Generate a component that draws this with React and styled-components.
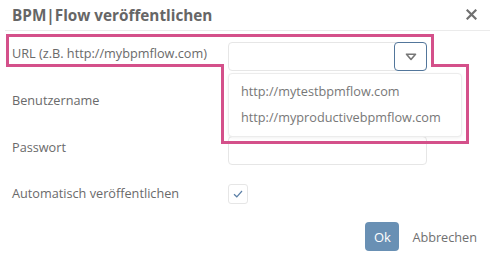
import React from "react";
import styled, { createGlobalStyle } from "styled-components";

const GlobalStyle = createGlobalStyle`
  html, body {
    margin: 0;
    padding: 0;
    background: #fff;
  }
  body {
    font-family: "Open Sans", "Liberation Sans", sans-serif;
    color: #666;
  }
`;

function App() {
  return (
    <>
      <GlobalStyle />
      <Dialog>
        <Header>
          <Title>BPM|Flow veröffentlichen</Title>
          <CloseButton aria-label="close">
            <svg width="11" height="11" viewBox="0 0 11 11">
              <path d="M1.5 1.5 L9.5 9.5 M9.5 1.5 L1.5 9.5" stroke="#707070" strokeWidth="2.2" strokeLinecap="square" />
            </svg>
          </CloseButton>
        </Header>
        <Form>
          <Row>
            <Label>URL (z.B. http://mybpmflow.com)</Label>
            <Combo>
              <Input />
              <DropButton>
                <svg width="12" height="8" viewBox="0 0 12 8">
                  <path d="M1.5 1.2 H10.5 L6 6.5 Z" fill="none" stroke="#777" strokeWidth="1.6" strokeLinejoin="round" />
                </svg>
              </DropButton>
              <Menu>
                <MenuItem>http://mytestbpmflow.com</MenuItem>
                <MenuItem>http://myproductivebpmflow.com</MenuItem>
              </Menu>
            </Combo>
          </Row>
          <Row>
            <Label>Benutzername</Label>
            <Input />
          </Row>
          <Row>
            <Label>Passwort</Label>
            <Input type="password" />
          </Row>
          <CheckRow>
            <CheckLabel>Automatisch veröffentlichen</CheckLabel>
            <CheckBox>
              <svg width="10" height="8" viewBox="0 0 10 8">
                <path d="M1 4.2 L3.8 6.8 L9 1" fill="none" stroke="#5b7fa6" strokeWidth="1.2" />
              </svg>
            </CheckBox>
          </CheckRow>
        </Form>
        <Footer>
          <OkButton>Ok</OkButton>
          <LinkButton>Abbrechen</LinkButton>
        </Footer>
        <Highlight width="495" height="260" viewBox="0 0 495 260">
          <path
            d="M7.5 35.5 H432.5 V65.5 H467.5 V142.5 H222.5 V65.5 H7.5 Z"
            fill="none"
            stroke="#d4508a"
            strokeWidth="3"
          />
        </Highlight>
      </Dialog>
    </>
  );
}

export default App;

const Dialog = styled.div`
  position: relative;
  width: 495px;
  height: 260px;
  box-sizing: border-box;
  overflow: hidden;
`;

const Header = styled.div`
  display: flex;
  align-items: center;
  justify-content: space-between;
  height: 30px;
  margin: 0 5px;
  padding: 0 13px 0 7px;
  border-bottom: 1px solid #ebebeb;
`;

const Title = styled.div`
  font-size: 15.3px;
  font-weight: 700;
  color: #666;
  margin-top: -1px;
`;

const CloseButton = styled.span`
  display: flex;
  align-items: center;
  margin-top: -1px;
`;

const Form = styled.div`
  display: flex;
  flex-direction: column;
  gap: 18px;
  padding: 11px 0 0 12px;
`;

const Row = styled.div`
  display: grid;
  grid-template-columns: 216px 199px;
  align-items: start;
  height: 29px;
`;

const CheckRow = styled(Row)`
  align-items: center;
  height: 20px;
  margin-top: 1px;
`;

const Label = styled.div`
  font-size: 12.7px;
  line-height: 22px;
  color: #6a6a6a;
`;

const CheckLabel = styled(Label)`
  line-height: 18px;
  margin-top: -2px;
`;

const Input = styled.input`
  box-sizing: border-box;
  width: 199px;
  height: 29px;
  border: 1px solid #e6e6e6;
  border-radius: 4px;
  background: #fff;
  outline: none;
`;

const Combo = styled.div`
  position: relative;
  display: flex;
  width: 199px;
  height: 29px;
`;

const DropButton = styled.div`
  position: absolute;
  right: 0;
  top: 0;
  box-sizing: border-box;
  width: 33px;
  height: 29px;
  border: 1px solid #52769b;
  border-radius: 4px;
  background: #fff;
  display: flex;
  align-items: center;
  justify-content: center;
`;

const Menu = styled.div`
  position: absolute;
  top: 31px;
  left: 0;
  width: 234px;
  height: 64px;
  box-sizing: border-box;
  padding: 4px 0;
  background: #fff;
  border: 1px solid #ececec;
  border-radius: 4px;
  box-shadow: 0 1px 3px rgba(0, 0, 0, 0.06);
  z-index: 2;
`;

const MenuItem = styled.div`
  height: 26px;
  line-height: 26px;
  padding-left: 12px;
  font-size: 12.7px;
  color: #777;
`;

const CheckBox = styled.div`
  box-sizing: border-box;
  width: 20px;
  height: 20px;
  border: 1px solid #e6e6e6;
  border-radius: 3px;
  display: flex;
  align-items: center;
  justify-content: center;
`;

const Footer = styled.div`
  display: flex;
  justify-content: flex-end;
  align-items: center;
  gap: 13px;
  padding: 18px 18px 0 0;
`;

const OkButton = styled.div`
  width: 34px;
  height: 29px;
  border-radius: 4px;
  background: #6990b4;
  color: #fff;
  font-size: 13px;
  display: flex;
  align-items: center;
  justify-content: center;
`;

const LinkButton = styled.div`
  font-size: 12.7px;
  color: #707070;
`;

const Highlight = styled.svg`
  position: absolute;
  left: 0;
  top: 0;
  pointer-events: none;
  z-index: 3;
`;
